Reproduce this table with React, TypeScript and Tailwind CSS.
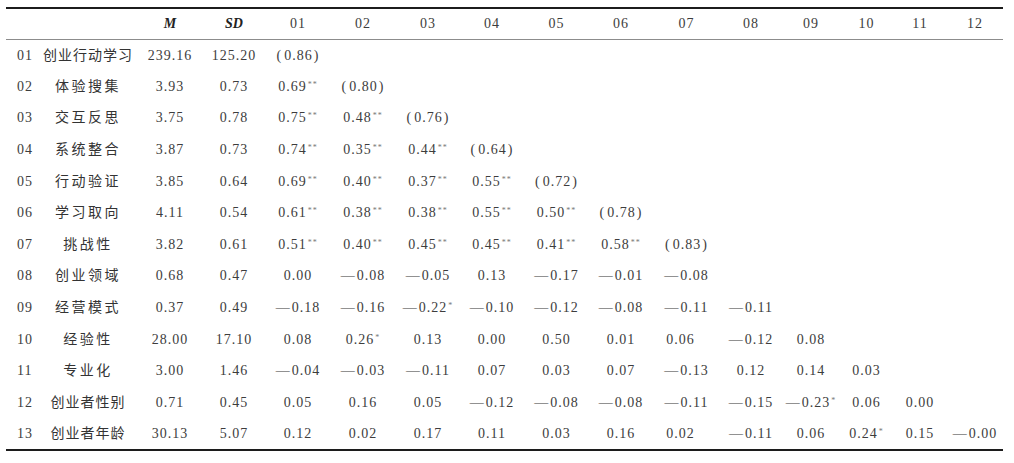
const cols = [
  "w-[32px]", "w-[100px]", "w-[64px]", "w-[64px]", "w-[64px]", "w-[66px]", "w-[64px]", "w-[64px]",
  "w-[65px]", "w-[64px]", "w-[67px]", "w-[62px]", "w-[58px]", "w-[53px]", "w-[54px]", "w-[56px]",
];

const heads = ["01", "02", "03", "04", "05", "06", "07", "08", "09", "10", "11", "12"];

type Row = { no: string; name: string; m: string; sd: string; r: string[]; wide?: boolean };

// "<" in front of a value = sits a bit left of the column centre, as in the source
const rows: Row[] = [
  { no: "01", name: "创业行动学习", m: "239.16", sd: "125.20", r: ["(0.86)"], wide: true },
  { no: "02", name: "体验搜集", m: "3.93", sd: "0.73", r: ["0.69**", "(0.80)"] },
  { no: "03", name: "交互反思", m: "3.75", sd: "0.78", r: ["0.75**", "0.48**", "(0.76)"] },
  { no: "04", name: "系统整合", m: "3.87", sd: "0.73", r: ["0.74**", "0.35**", "0.44**", "(0.64)"] },
  { no: "05", name: "行动验证", m: "3.85", sd: "0.64", r: ["0.69**", "0.40**", "0.37**", "0.55**", "(0.72)"] },
  { no: "06", name: "学习取向", m: "4.11", sd: "0.54", r: ["0.61**", "0.38**", "0.38**", "0.55**", "0.50**", "(0.78)"] },
  { no: "07", name: "挑战性", m: "3.82", sd: "0.61", r: ["0.51**", "0.40**", "0.45**", "0.45**", "0.41**", "0.58**", "(0.83)"] },
  { no: "08", name: "创业领域", m: "0.68", sd: "0.47", r: ["0.00", "-0.08", "-0.05", "0.13", "-0.17", "-0.01", "-0.08"] },
  { no: "09", name: "经营模式", m: "0.37", sd: "0.49", r: ["-0.18", "-0.16", "-0.22*", "-0.10", "-0.12", "-0.08", "-0.11", "-0.11"] },
  { no: "10", name: "经验性", m: "28.00", sd: "17.10", r: ["0.08", "0.26*", "0.13", "0.00", "0.50", "0.01", "<0.06", "-0.12", "0.08"] },
  { no: "11", name: "专业化", m: "3.00", sd: "1.46", r: ["-0.04", "-0.03", "-0.11", "0.07", "0.03", "0.07", "-0.13", "0.12", "0.14", "0.03"] },
  { no: "12", name: "创业者性别", m: "0.71", sd: "0.45", r: ["0.05", "0.16", "0.05", "-0.12", "-0.08", "-0.08", "-0.11", "-0.15", "-0.23*", "0.06", "0.00"], wide: true },
  { no: "13", name: "创业者年龄", m: "30.13", sd: "5.07", r: ["0.12", "0.02", "0.17", "0.11", "0.03", "0.16", "<0.02", "-0.11", "0.06", "0.24*", "0.15", "-0.00"], wide: true },
];

const Value = ({ v }: { v: string }) => {
  const shift = v.startsWith("<");
  let s = shift ? v.slice(1) : v;
  const stars = s.match(/\*+$/)?.[0] ?? "";
  s = s.replace(/\*+$/, "");
  const neg = s.startsWith("-");
  if (neg) s = s.slice(1);
  const paren = s.startsWith("(");
  if (paren) s = s.slice(1, -1);

  return (
    <span className={shift ? "pr-[12px]" : ""}>
      {neg && <span className="mr-[1px]">—</span>}
      {paren && <span className="mr-[2px]">(</span>}
      {s}
      {paren && <span className="ml-[1px]">)</span>}
      {stars && <sup className="ml-[1px] text-[8px] tracking-[1px] text-[#777]">{stars}</sup>}
    </span>
  );
};

export default function App() {
  return (
    <div className="min-h-[463px] w-[1014px] bg-white pl-[6px] pt-[7px] text-[14px] tracking-[1px] text-[#3d3d3d] [font-family:'Liberation_Serif','Noto_Sans_CJK_SC',serif]">
      <table className="w-[997px] table-fixed border-collapse border-t-2 border-b-2 border-[#1c1c1c]">
        <colgroup>
          {cols.map((c, i) => (
            <col key={i} className={c} />
          ))}
        </colgroup>
        <thead>
          <tr className="h-[31px] border-b border-[#8c8c8c]">
            <th />
            <th />
            <th className="text-center font-bold italic tracking-normal text-[#222]">M</th>
            <th className="text-center font-bold italic tracking-normal text-[#222]">SD</th>
            {heads.map((h) => (
              <th key={h} className="text-center font-normal">
                {h}
              </th>
            ))}
          </tr>
        </thead>
        <tbody>
          {rows.map((row) => (
            <tr key={row.no} className="h-[31.6px]">
              <td className="pl-[11px] text-left">{row.no}</td>
              <td className={`text-center text-[#333] ${row.wide ? "tracking-[1px]" : "tracking-[2.5px]"}`}>{row.name}</td>
              <td className="text-center">{row.m}</td>
              <td className="text-center">{row.sd}</td>
              {heads.map((h, i) => (
                <td key={h} className="whitespace-nowrap text-center">
                  {row.r[i] ? <Value v={row.r[i]} /> : null}
                </td>
              ))}
            </tr>
          ))}
        </tbody>
      </table>
    </div>
  );
}
